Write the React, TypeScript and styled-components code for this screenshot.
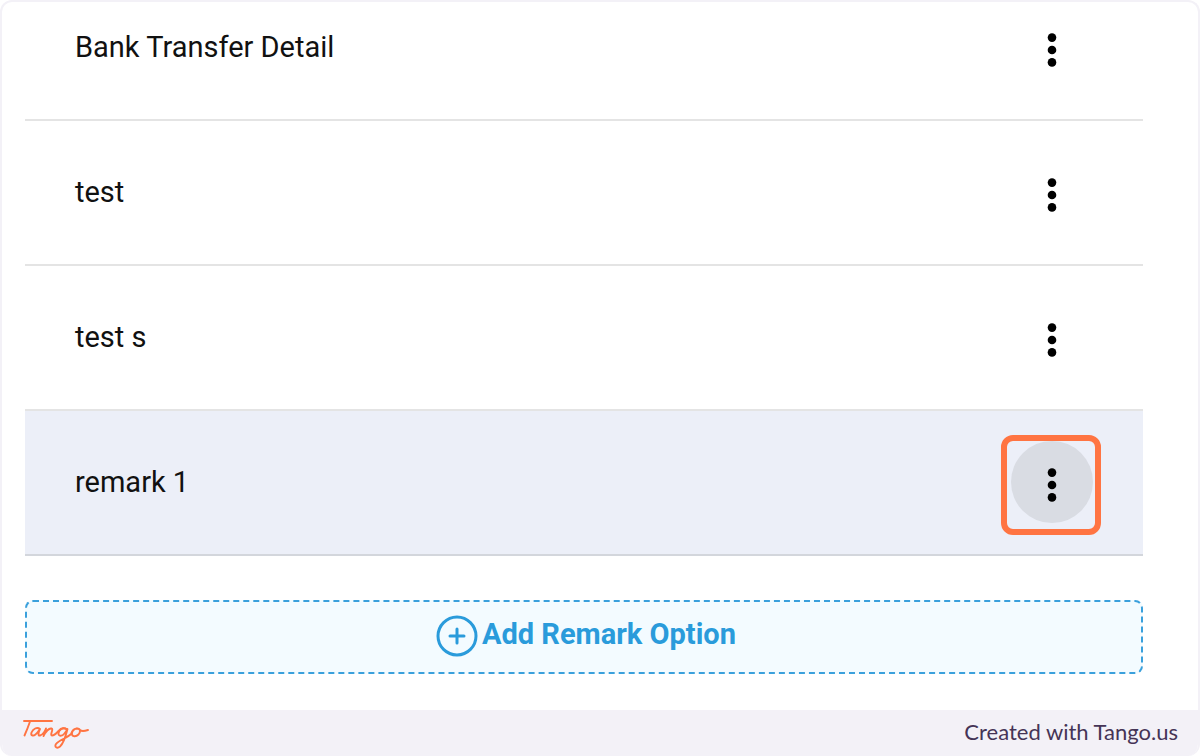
import React from "react";
import styled, { createGlobalStyle } from "styled-components";

const GlobalStyle = createGlobalStyle`
  *, *::before, *::after { box-sizing: border-box; }
  body {
    margin: 0;
    background: #fff;
    font-family: Roboto, "Liberation Sans", sans-serif;
  }
`;

const Frame = styled.div`
  border: 2px solid #f3f1f7;
  border-bottom: 0;
  border-radius: 12px;
  background: #fff;
  overflow: hidden;
`;

const Content = styled.main`
  padding: 0 55px 36px 23px;
`;

const RemarkList = styled.ul`
  list-style: none;
  margin: -26px 0 44px;
  padding: 0;
`;

const RemarkRow = styled.li<{ $active?: boolean }>`
  display: flex;
  align-items: center;
  justify-content: space-between;
  height: 145px;
  padding: 0 50px;
  border-bottom: 2px solid ${(p) => (p.$active ? "#d3d6dc" : "#e4e4e4")};
  background: ${(p) => (p.$active ? "#eceff8" : "transparent")};
`;

const RemarkName = styled.span`
  font-size: 29px;
  line-height: 36px;
  padding-bottom: 2px;
  color: #111;
`;

const HighlightFrame = styled.span<{ $active?: boolean }>`
  display: flex;
  align-items: center;
  justify-content: center;
  width: 100px;
  height: 100px;
  margin: 4px -8px 0 0;
  border: 6px solid ${(p) => (p.$active ? "#ff7442" : "transparent")};
  border-radius: 12px;
`;

const MenuButton = styled.button<{ $active?: boolean }>`
  display: flex;
  align-items: center;
  justify-content: center;
  width: 82px;
  height: 82px;
  margin: 0 0 6px 2px;
  padding: 6px 0 0;
  border: 0;
  border-radius: 50%;
  background: ${(p) => (p.$active ? "#d9dce3" : "transparent")};
  color: #000;
  cursor: pointer;
`;

const AddButton = styled.button`
  display: flex;
  align-items: center;
  justify-content: center;
  gap: 4px;
  width: 100%;
  height: 74px;
  padding: 0 0 6px 4px;
  border: 2px dashed #3aa0dc;
  border-radius: 8px;
  background: #f3fbff;
  color: #2a9bdb;
  font-family: inherit;
  font-size: 29px;
  font-weight: 700;
  line-height: 36px;
  cursor: pointer;

  svg { margin-top: 4px; }
`;

const Footer = styled.footer`
  display: flex;
  align-items: center;
  justify-content: space-between;
  height: 46px;
  padding: 0 20px 0 18px;
  background: #f3f1f7;
`;

const LogoLink = styled.a`
  display: flex;
  padding-top: 2px;
  color: #ff7442;
`;

const Credit = styled.span`
  padding-bottom: 2px;
  font-family: Lato, sans-serif;
  font-size: 22px;
  line-height: 28px;
  color: #453456;
`;

const DotsIcon = () => (
  <svg width="10" height="34" viewBox="0 0 10 34" fill="currentColor" aria-hidden="true">
    <circle cx="5" cy="4.6" r="4.3" />
    <circle cx="5" cy="17" r="4.3" />
    <circle cx="5" cy="29.4" r="4.3" />
  </svg>
);

const PlusCircleIcon = () => (
  <svg width="42" height="42" viewBox="0 0 42 42" fill="none" stroke="currentColor" strokeWidth="3" strokeLinecap="round" aria-hidden="true">
    <circle cx="21" cy="21" r="19" />
    <path d="M21 14v14M14 21h14" />
  </svg>
);

const TangoLogo = () => (
  <svg width="70" height="32" viewBox="0 0 70 32" fill="none" stroke="currentColor" strokeWidth="1.9" strokeLinecap="round" strokeLinejoin="round" aria-hidden="true">
    <path d="M4 3H32M10 3.500C8.500 8 6.500 13 4.500 17.500" />
    <path d="M20 11C17 8.500 13 11 11.500 14.500C10.500 17.500 13 18.500 15.500 16.500C17.500 15 19 12.500 20 11C18.500 14 17.500 18 20 17.500C23 16.500 25 13 26 10.500L23.500 18C25.500 14 29 10 31.500 10.500C34 11 29.500 17 32 17.500C35 17.500 37 14.500 39 12.500C41 10 45 9.500 47 11.500" />
    <path d="M47 11.500C43 8.500 39 12 38.500 15C38 18.500 42 18.500 44.500 15.500C45.500 14.500 46.500 13 47.500 11C46 17 44 25 40 28.500C37 31 34 29 36 26C39 22 47 20 51 16C52 13 54 10.500 57 10.500C61 10.500 60.500 14 58.500 16.500C55.500 19.500 51 18.500 52 14.500C53 11 57 9 60 12C62 14 65 13 68 12" />
  </svg>
);

const remarks = [
  { name: "Bank Transfer Detail" },
  { name: "test" },
  { name: "test s" },
  { name: "remark 1", active: true },
];

export default function App() {
  return (
    <>
      <GlobalStyle />
      <Frame>
        <Content>
          <RemarkList>
            {remarks.map(({ name, active }) => (
              <RemarkRow key={name} $active={active}>
                <RemarkName>{name}</RemarkName>
                <HighlightFrame $active={active}>
                  <MenuButton type="button" $active={active} aria-label={`Options for ${name}`}>
                    <DotsIcon />
                  </MenuButton>
                </HighlightFrame>
              </RemarkRow>
            ))}
          </RemarkList>
          <AddButton type="button">
            <PlusCircleIcon />
            Add Remark Option
          </AddButton>
        </Content>
        <Footer>
          <LogoLink href="#" aria-label="Tango">
            <TangoLogo />
          </LogoLink>
          <Credit>Created with Tango.us</Credit>
        </Footer>
      </Frame>
    </>
  );
}
